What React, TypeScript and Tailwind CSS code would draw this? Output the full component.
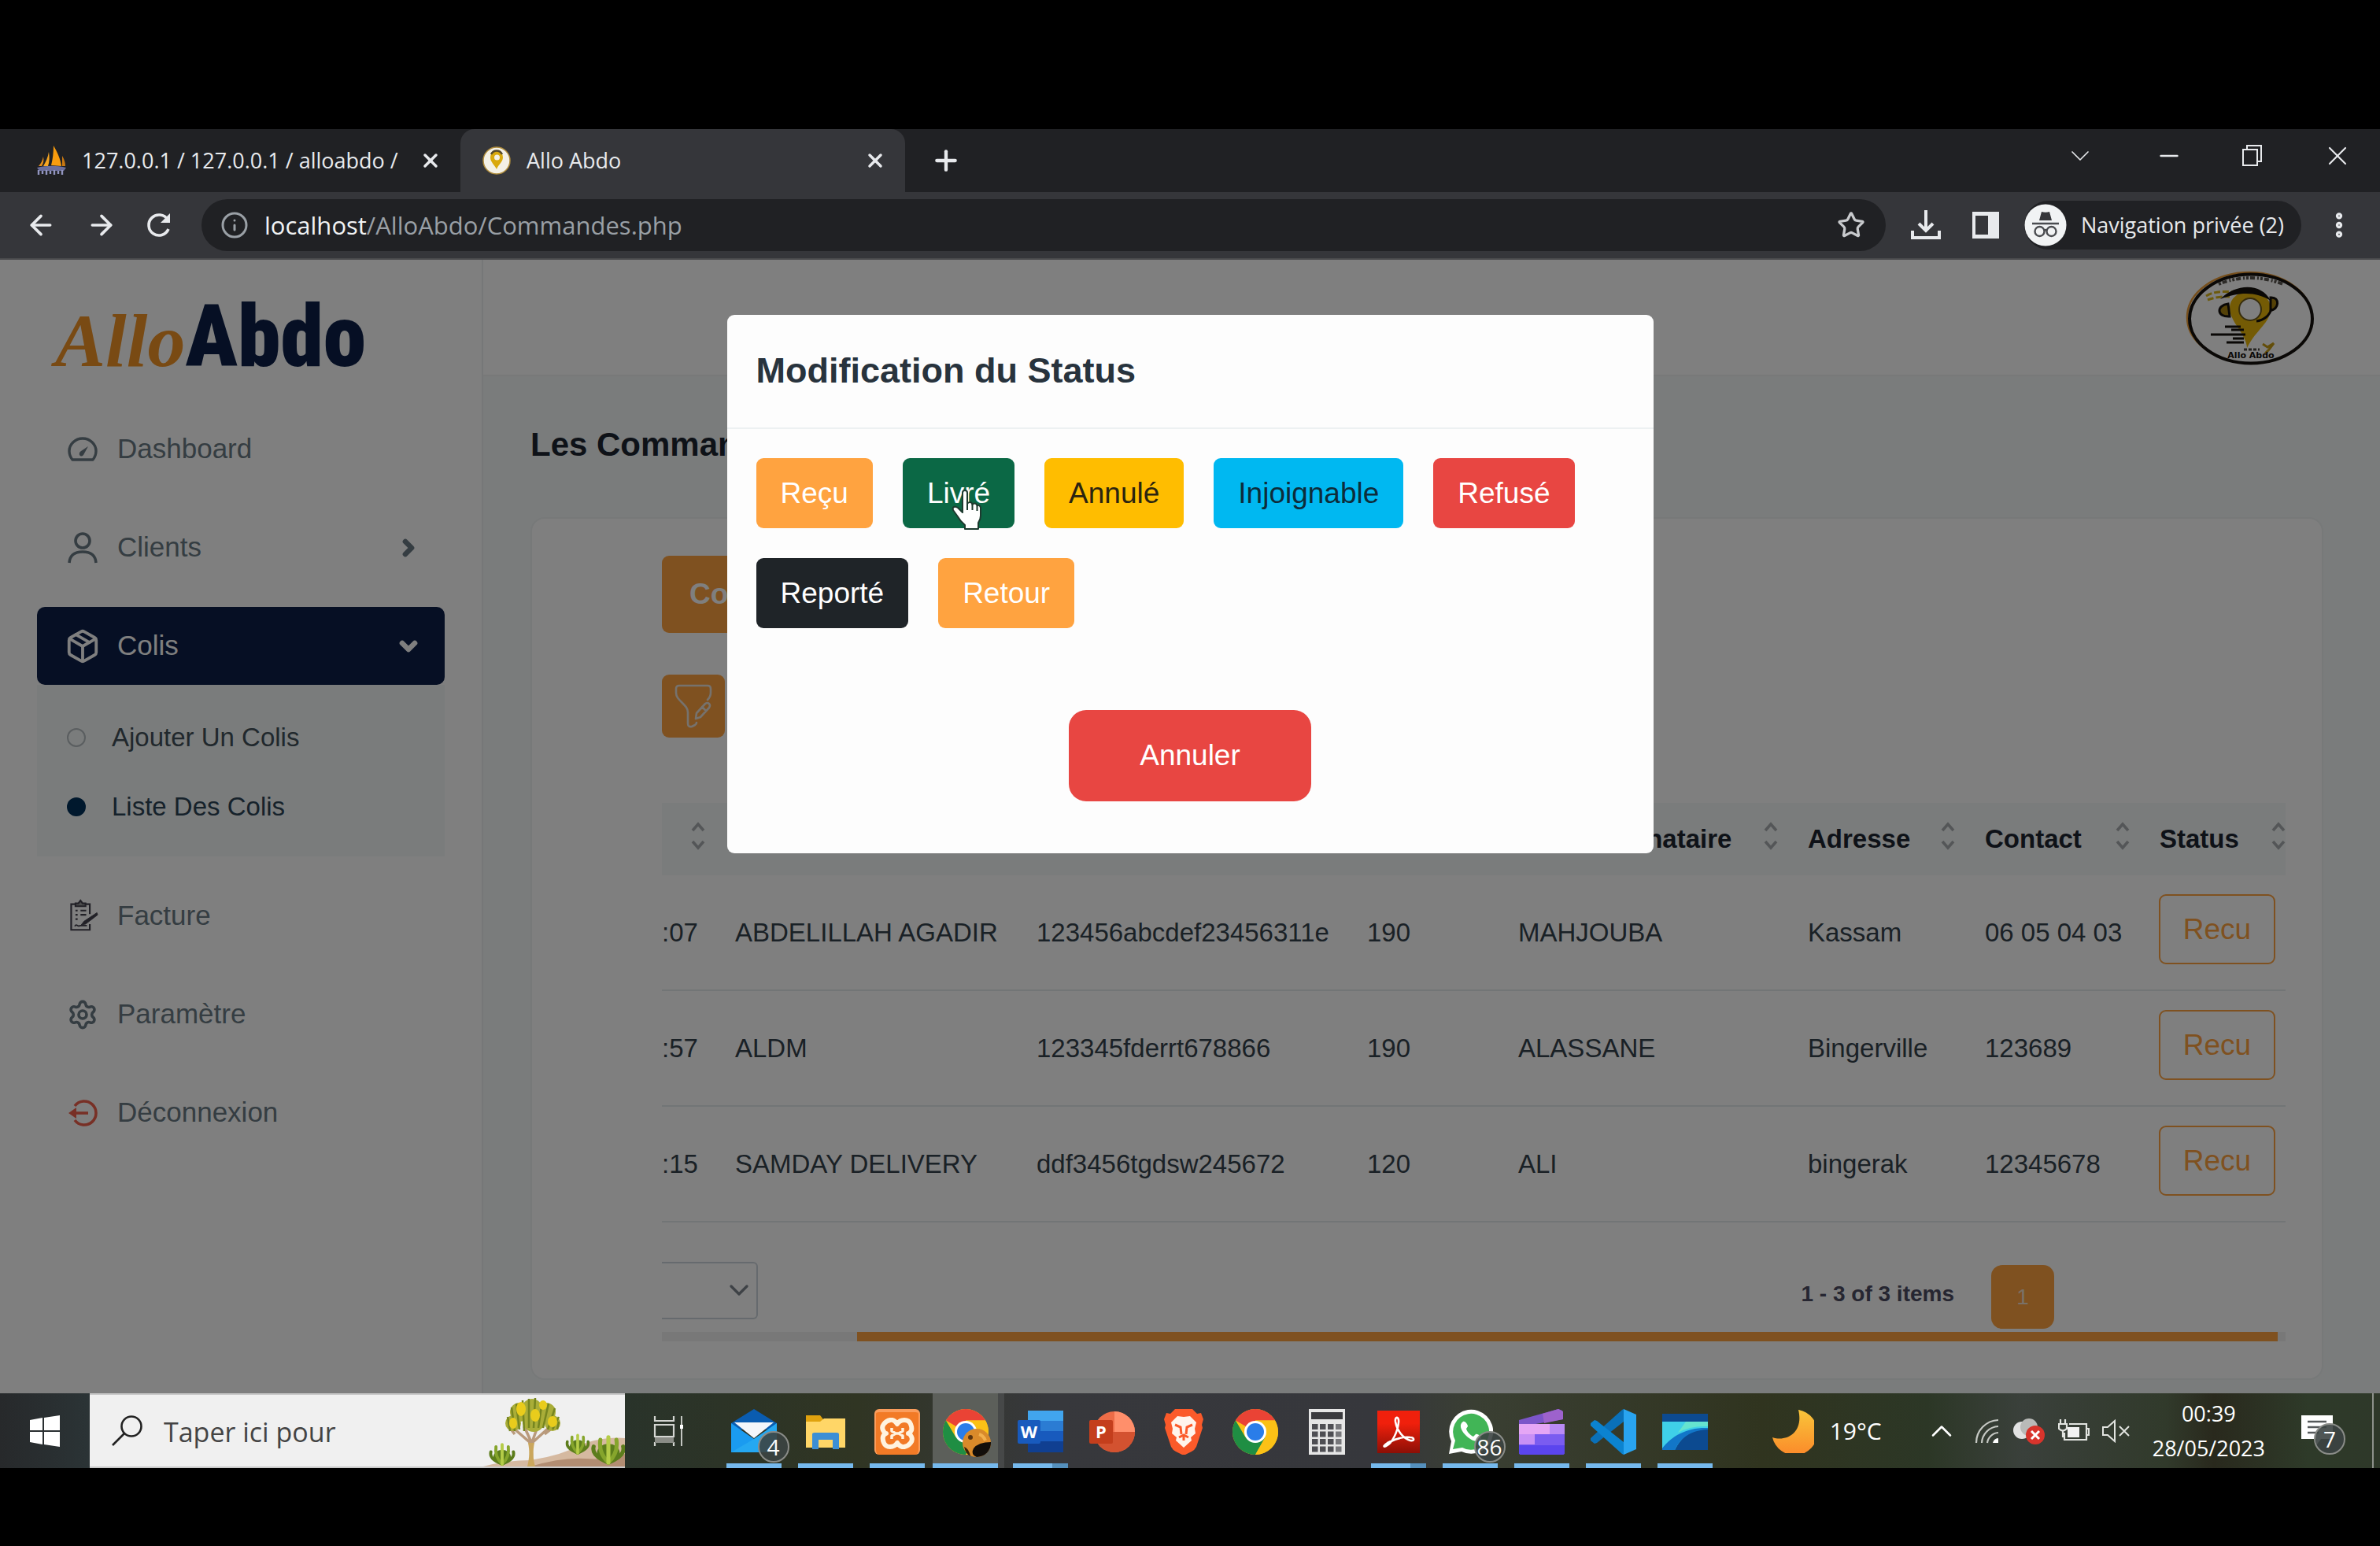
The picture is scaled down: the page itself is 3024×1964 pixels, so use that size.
import React, { useState } from "react";
import {
  ArrowLeft,
  ArrowRight,
  ChevronDown,
  ChevronRight,
  ChevronUp,
  EllipsisVertical,
  Info,
  Minus,
  Package,
  Plus,
  Settings,
  Star,
  X,
} from "lucide-react";

const arial = "font-['Liberation_Sans',Arial,sans-serif]";
const segoe = "font-['Open_Sans','Noto_Sans',sans-serif]";

/* ---------- browser chrome ---------- */

function SailIcon() {
  return (
    <svg viewBox="0 0 40 40" className="size-10">
      <path d="M22 1c5 9 9 17 10 26l-13-1c2-8 3-16 3-25z" fill="#f89c0e" />
      <path d="M16 9c1 7 1 12-1 18H9c3-5 6-11 7-18z" fill="#f6a623" />
      <path d="M9 15c1 5 0 9-2 12H3c3-3 5-7 6-12z" fill="#e58e1a" />
      <path d="M33 14c3 5 4 9 4 13h-4z" fill="#c97811" />
      <path d="M1 29c12-3 26-3 37 0l-3 4H4z" fill="#6c6f9c" />
      <path d="M3 38v-6M8 37v-4M13 38v-6M18 37v-4M23 38v-6M28 37v-4M33 38v-6" stroke="#9295c0" strokeWidth="2.4" />
    </svg>
  );
}

function FavIcon() {
  return (
    <svg viewBox="0 0 36 36" className="size-9">
      <circle cx="18" cy="18" r="17" fill="#f4f1e6" stroke="#b08d3c" strokeWidth="1.5" />
      <path d="M18 29c-2-5-8-9-8-15a8 8 0 0 1 16 0c0 6-6 9-8 15z" fill="#d9a90d" />
      <circle cx="18.500" cy="14" r="3.500" fill="#f4f1e6" />
      <path d="M11 10c3-6 11-6 14 0" stroke="#55492a" strokeWidth="2.500" fill="none" />
    </svg>
  );
}

function ReloadIcon() {
  return (
    <svg viewBox="0 0 34 34" className="size-[34px]" fill="none" stroke="#e8eaed" strokeWidth="3.600">
      <path d="M28 22a13 13 0 1 1-1-12" />
      <path d="M30 2v12H18z" fill="#e8eaed" stroke="none" />
    </svg>
  );
}

function DownloadIcon() {
  return (
    <svg viewBox="0 0 38 38" className="size-[38px]" fill="none" stroke="#e8eaed" strokeWidth="4">
      <path d="M19 0v25M10 17l9 9 9-9" />
      <path d="M2 26v9h34v-9" />
    </svg>
  );
}

function SidePanelIcon() {
  return (
    <svg viewBox="0 0 34 34" className="size-[34px]">
      <path d="M0 0h34v34H0z" fill="#e8eaed" />
      <path d="M4 5h16v24H4z" fill="#35363a" />
    </svg>
  );
}

function IncognitoIcon() {
  return (
    <svg viewBox="0 0 54 54" className="size-[54px]">
      <circle cx="27" cy="27" r="26.500" fill="#f1f3f4" />
      <path d="M19 21l3-11c3 1 7 1 10 0l3 11z" fill="#35363a" />
      <path d="M10 25h34" stroke="#4a4c50" strokeWidth="2.600" />
      <g fill="none" stroke="#4a4c50" strokeWidth="2.400">
        <circle cx="19.500" cy="35" r="6" />
        <circle cx="34.500" cy="35" r="6" />
        <path d="M25.500 34q1.500-2 3 0" />
      </g>
    </svg>
  );
}

function RestoreIcon() {
  return (
    <svg viewBox="0 0 26 28" className="h-7 w-[26px]" fill="none" stroke="#e8eaed" strokeWidth="2">
      <path d="M1 6h18v20H1z" />
      <path d="M6 6V1h18v20h-5" />
    </svg>
  );
}

function Browser() {
  return (
    <header className={segoe}>
      <div className="flex h-20 items-center bg-[#202124] text-[27px] text-[#e8eaed]">
        <div className="flex h-20 w-[585px] shrink-0 items-center pl-[46px] pr-5">
          <SailIcon />
          <span className="ml-[18px] flex-1 overflow-hidden whitespace-nowrap">127.0.0.1 / 127.0.0.1 / alloabdo /</span>
          <button aria-label="Fermer l'onglet" className="ml-5 p-1">
            <X className="size-7" strokeWidth={3} />
          </button>
        </div>
        <div className="flex h-20 w-[565px] shrink-0 items-center rounded-t-[18px] bg-[#35363a] pl-7 pr-5">
          <FavIcon />
          <span className="ml-5 flex-1">Allo Abdo</span>
          <button aria-label="Fermer l'onglet" className="p-1">
            <X className="size-7" strokeWidth={3} />
          </button>
        </div>
        <button aria-label="Nouvel onglet" className="ml-8">
          <Plus className="size-10" strokeWidth={2.600} />
        </button>
        <div className="mb-3 ml-auto flex items-center gap-[75px] pr-[34px]">
          <button aria-label="Rechercher les onglets"><ChevronDown className="size-10" strokeWidth={1} /></button>
          <button aria-label="Réduire"><Minus className="size-9" strokeWidth={1.600} /></button>
          <button aria-label="Restaurer"><RestoreIcon /></button>
          <button aria-label="Fermer"><X className="size-10" strokeWidth={1.300} /></button>
        </div>
      </div>
      <div className="flex h-[86px] items-center border-b-2 border-[#4a4b4d] bg-[#35363a] pl-8 pr-8 text-[#e8eaed]">
        <div className="flex items-center gap-[37px]">
          <button aria-label="Précédent"><ArrowLeft className="size-10" strokeWidth={2.200} /></button>
          <button aria-label="Suivant"><ArrowRight className="size-10" strokeWidth={2.200} /></button>
          <button aria-label="Actualiser"><ReloadIcon /></button>
        </div>
        <div className="ml-9 flex h-[66px] flex-1 items-center rounded-full bg-[#202124] pl-6 pr-[26px]">
          <Info className="size-9 text-[#9aa0a6]" strokeWidth={2} />
          <a href="#page" className="ml-5 flex-1 text-[31px] text-[#9aa0a6]">
            <span className="text-[#f1f3f4]">localhost</span>/AlloAbdo/Commandes.php
          </a>
          <button aria-label="Ajouter aux favoris"><Star className="size-9 text-[#c8cacd]" strokeWidth={2.200} /></button>
        </div>
        <div className="ml-8 flex items-center">
          <button aria-label="Téléchargements"><DownloadIcon /></button>
          <button aria-label="Panneau latéral" className="ml-10"><SidePanelIcon /></button>
          <button className="ml-8 flex h-[62px] items-center rounded-full bg-[#202124] pr-[22px] text-[27px]">
            <IncognitoIcon />
            <span className="ml-[18px]">Navigation privée (2)</span>
          </button>
          <button aria-label="Menu" className="ml-7"><EllipsisVertical className="size-10" strokeWidth={3} /></button>
        </div>
      </div>
    </header>
  );
}

/* ---------- sidebar ---------- */

function GaugeIcon() {
  return (
    <svg viewBox="0 0 40 40" className="size-10" fill="none" stroke="currentColor" strokeWidth="3.400" strokeLinecap="round">
      <path d="M7 33Q3 28 3 22a17 16 0 0 1 34 0q0 6-4 11z" strokeLinejoin="round" />
      <path d="M27 16l-6 11q-3 3-5 0-1-3 2-5z" fill="currentColor" stroke="none" />
    </svg>
  );
}

function UserIcon() {
  return (
    <svg viewBox="0 0 40 40" className="size-10" fill="none" stroke="currentColor" strokeWidth="3.600">
      <circle cx="20" cy="11" r="9" />
      <path d="M3 39q1-14 17-14t17 14" />
    </svg>
  );
}

function InvoiceIcon() {
  return (
    <svg viewBox="0 0 44 46" className="h-[46px] w-11 text-[#44434f]" fill="none" stroke="currentColor" strokeWidth="2.400">
      <path d="M26 6h6v14M12 6H6v36h26V34" />
      <path d="M12 9h14V5h-4l-3-4-3 4h-4z" fill="#9a9a9a" />
      <path d="M12 15h3M19 15h8M12 21h3M19 21h8M12 27h3" />
      <path d="M42 18 24 30l-4 5 6-1 17-13z" fill="currentColor" strokeWidth="1" />
      <path d="M11 37c3-5 4 2 8-1h9" strokeWidth="2" />
    </svg>
  );
}

function LogoutIcon() {
  return (
    <svg viewBox="0 0 40 40" className="size-10 text-[#f0604c]" fill="none" stroke="currentColor" strokeWidth="3.600">
      <path d="M10 11a15 15 0 1 1 0 18" />
      <path d="M8 20h19" />
      <path d="M12 13v14l-10-7z" fill="currentColor" stroke="none" />
    </svg>
  );
}

function NavItem({ icon, label, end, active }: { icon: React.ReactNode; label: string; end?: React.ReactNode; active?: boolean }) {
  return (
    <a
      href={"#" + label}
      className={
        active
          ? "flex h-[99px] items-center rounded-[10px] bg-[#0c1f48] pl-[38px] pr-[30px] text-[35px] text-white"
          : "flex h-[99px] items-center rounded-[10px] pl-[38px] pr-[30px] text-[35px] text-[#6a7a84]"
      }
    >
      <span className="flex w-10 justify-center">{icon}</span>
      <span className="ml-6 flex-1">{label}</span>
      {end}
    </a>
  );
}

function Sidebar() {
  return (
    <aside className="w-[614px] shrink-0 border-r-2 border-[#eceff0] bg-white">
      <div className="flex h-[191px] items-baseline pl-[70px] pt-8">
        <span className="font-['Liberation_Serif',serif] text-[96px] leading-[132px] font-bold italic text-[#f29427]">Allo</span>
        <span className="font-['Roboto_Condensed','Liberation_Sans_Narrow',Roboto,sans-serif] text-[110px] leading-[132px] font-black text-[#0c1f48]">Abdo</span>
      </div>
      <nav className="flex flex-col gap-[26px] px-[47px]">
        <NavItem icon={<GaugeIcon />} label="Dashboard" />
        <NavItem icon={<UserIcon />} label="Clients" end={<ChevronRight className="size-8" strokeWidth={5} />} />
        <div>
          <NavItem active icon={<Package className="size-[46px] shrink-0" strokeWidth={2} />} label="Colis" end={<ChevronDown className="size-8" strokeWidth={5} />} />
          <ul className="flex h-[218px] flex-col gap-12 bg-[#f5f9f8] pl-[38px] pt-[47px] text-[33px] leading-10 text-[#42515a]">
            <li>
              <a href="#ajouter" className="flex items-center gap-[33px]">
                <span className="size-6 rounded-full border-2 border-[#b5bcc0]" />
                Ajouter Un Colis
              </a>
            </li>
            <li>
              <a href="#liste" className="flex items-center gap-[33px] text-[#2c4456]">
                <span className="size-6 rounded-full bg-[#00305a]" />
                Liste Des Colis
              </a>
            </li>
          </ul>
        </div>
        <NavItem icon={<InvoiceIcon />} label="Facture" />
        <NavItem icon={<Settings className="size-10" strokeWidth={2.200} />} label="Paramètre" />
        <NavItem icon={<LogoutIcon />} label="Déconnexion" />
      </nav>
    </aside>
  );
}

/* ---------- main area ---------- */

function Emblem() {
  return (
    <svg viewBox="0 0 164 120" className="h-[120px] w-[164px]">
      <ellipse cx="81" cy="59" rx="79" ry="57" fill="none" stroke="#ee9f38" strokeWidth="2.500" />
      <ellipse cx="83" cy="61" rx="78" ry="56.500" fill="#fff" stroke="#15110d" strokeWidth="4" />
      <path d="M42 17Q82 1 124 17" fill="none" stroke="#5a5650" strokeWidth="4" strokeDasharray="3 2 6 3 2 2" />
      <path d="M26 32c10-6 20-6 36-5M28 37c8-3 18-5 28-4" stroke="#d9b416" strokeWidth="3" fill="none" strokeDasharray="8 3" />
      <path d="M78 98c0-16-22-34-22-50 0-13 11-22 26-22s26 9 26 22c0 18-18 26-30 50z" fill="#e8b70b" />
      <path d="M44 36c20-20 52-21 64 2-18-11-38-12-64-2z" fill="#15110d" />
      <circle cx="82" cy="49" r="14" fill="#fff" stroke="#6e5a1a" strokeWidth="2" />
      <path d="M54 42c-15 2-15 17 2 16zM108 34c13-1 10 16 0 16z" fill="#a8830f" stroke="#15110d" strokeWidth="3" />
      <path d="M90 64c9-1 17-7 19-16" stroke="#15110d" strokeWidth="3" fill="none" />
      <path d="M50 71h20M58 75h16M32 81h44M60 86h14M52 91h22" stroke="#15110d" strokeWidth="3" />
      <path d="M98 93l6 4 8-5-6 8-5 5" stroke="#c79d14" strokeWidth="3" fill="none" />
      <path d="M74 100h20" stroke="#4a4640" strokeWidth="3" strokeDasharray="4 2" />
      <text x="83" y="111" textAnchor="middle" fontSize="11" fontWeight="700" fontFamily="DejaVu Sans" fill="#15110d">Allo Abdo</text>
    </svg>
  );
}

function FilterIcon() {
  return (
    <svg viewBox="0 0 48 56" className="h-14 w-12" fill="none" stroke="#ece4da" strokeWidth="2.600" strokeLinecap="round" strokeLinejoin="round">
      <path d="M42 20c3-3 4-6 4-9V6q0-4-4-4H6Q2 2 2 6v5c0 5 3 8 7 12 5 5 8 8 8 13v14q0 5 5 4l4-2q2-1 2-3" />
      <path d="M28 37l11-12q3-2 5 0t0 5L33 42l-6 2zM35 29l5 5" />
    </svg>
  );
}

function SortIcon() {
  return (
    <svg viewBox="0 0 18 36" className="h-9 w-[18px]" fill="none" stroke="#a9adb0" strokeWidth="3.600">
      <path d="M2 11l7-8 7 8M2 25l7 8 7-8" />
    </svg>
  );
}

const columns = ["", "Client", "Code", "Prix", "Nom Destinataire", "Adresse", "Contact", "Status"];
const rows = [
  [":07", "ABDELILLAH AGADIR", "123456abcdef23456311e", "190", "MAHJOUBA", "Kassam", "06 05 04 03"],
  [":57", "ALDM", "123345fderrt678866", "190", "ALASSANE", "Bingerville", "123689"],
  [":15", "SAMDAY DELIVERY", "ddf3456tgdsw245672", "120", "ALI", "bingerak", "12345678"],
];

function Orders() {
  return (
    <table className="w-full table-fixed text-left text-[33px] leading-10 text-[#35424c]">
      <colgroup>
        <col className="w-[75px]" />
        <col className="w-[383px]" />
        <col className="w-[420px]" />
        <col className="w-[192px]" />
        <col />
        <col className="w-[225px]" />
        <col className="w-[222px]" />
        <col className="w-[178px]" />
      </colgroup>
      <thead>
        <tr className="h-[92px] bg-[#f5f9f8] text-[#1c2530]">
          {columns.map((c, i) => (
            <th key={i} className={i === 7 ? "pl-[18px]" : "pl-[18px] pr-5"}>
              <span className="flex items-center justify-between whitespace-nowrap">
                {c}
                <button aria-label={"Trier " + c} className={i === 0 ? "ml-auto mb-2" : "mb-2"}><SortIcon /></button>
              </span>
            </th>
          ))}
        </tr>
      </thead>
      <tbody>
        {rows.map((r) => (
          <tr key={r[0]}>
            {r.map((v, i) => (
              <td key={i} className={i === 0 ? "border-b-2 border-[#e4ebed]" : "whitespace-nowrap border-b-2 border-[#e4ebed] pl-[18px]"}>{v}</td>
            ))}
            <td className="border-b-2 border-[#e4ebed] pb-8 pl-[17px] pt-6">
              <button className="block h-[89px] w-[148px] rounded-[9px] border-2 border-[#ffa340] text-[37px] text-[#ffa340]">Recu</button>
            </td>
          </tr>
        ))}
      </tbody>
    </table>
  );
}

function Main() {
  return (
    <div className="flex min-w-0 flex-1 flex-col bg-[#f5f9f8]">
      <div className="flex h-[148px] items-start justify-end border-b-2 border-[#f0f3f3] bg-white pr-[83px] pt-[14px]">
        <Emblem />
      </div>
      <main className="flex flex-1 flex-col pb-[17px] pl-[60px] pr-[72px] pt-[61px]">
        <h1 className="text-[42px] leading-[52px] font-bold text-[#1c2530]">Les Commandes</h1>
        <section className="mt-[66px] flex-1 rounded-[18px] border-2 border-[#eef2f3] bg-white pb-11 pl-[165px] pr-[46px] pt-[47px]">
          <button className="block h-[98px] rounded-[9px] bg-[#ffa340] px-[35px] text-[37px] font-bold text-white">Colis</button>
          <button aria-label="Filtrer" className="mt-[53px] flex h-20 w-20 items-center justify-center rounded-[9px] bg-[#ffa340]">
            <FilterIcon />
          </button>
          <div className="mt-[83px]">
            <Orders />
          </div>
          <div className="flex items-start pb-1 pt-[50px]">
            <div className="relative">
              <select aria-label="Nombre de lignes" className="h-[73px] w-[122px] appearance-none rounded-r-[6px] border-y-2 border-r-2 border-[#cdd5dc] bg-white">
                <option></option>
              </select>
              <ChevronDown className="pointer-events-none absolute right-1 top-4 size-10 text-[#7c858c]" strokeWidth={2} />
            </div>
            <span className="ml-auto flex h-[81px] items-center text-[28px] font-bold text-[#4c4c63]">1 - 3 of 3 items</span>
            <button className="ml-[47px] mr-[294px] mt-1 h-[81px] w-20 rounded-[14px] bg-[#ffa340] text-[28px] text-[#f4e3cf]">1</button>
          </div>
          <div className="flex h-3 bg-[#f1f1f1]">
            <div className="ml-[12%] mr-[10px] flex-1 bg-[#ffa340]" />
          </div>
        </section>
      </main>
    </div>
  );
}

/* ---------- dialog ---------- */

function HandCursor() {
  return (
    <svg viewBox="0 0 40 52" className="pointer-events-none absolute left-[62px] top-10 h-[52px] w-10">
      <path
        d="M14 4q0-3 3-3t3 3v14q1-2 3.500-2t3 3q1-1.500 3-1.500t3 3q1-1 2.500-.5t2 3V33q0 5-3 9v8H17v-5Q11 40 7 33l-5-7q-1-3 1-4t5 1l6 6z"
        fill="#fff"
        stroke="#1d3a2f"
        strokeWidth="2"
        strokeLinejoin="round"
      />
      <path d="M20 18v8M26.500 19v7M32.500 21v6" stroke="#1d3a2f" strokeWidth="2" />
    </svg>
  );
}

const statusButton = "relative h-[89px] rounded-[9px] px-[31px]";

function StatusDialog({ onClose }: { onClose: () => void }) {
  return (
    <div className="absolute inset-0 flex items-start justify-center bg-black/50 pt-[70px]">
      <div role="dialog" aria-labelledby="status-title" className="w-[1177px] rounded-[9px] bg-[#fdfdfd] pb-[66px]">
        <h2 id="status-title" className="border-b-2 border-[#edf1f2] px-[37px] pb-[45px] pt-11 text-[45px] leading-[54px] font-bold text-[#28333d]">
          Modification du Status
        </h2>
        <div className="flex flex-wrap gap-x-[38px] gap-y-[38px] px-[37px] pt-[37px] text-[37px] text-white">
          <button className={statusButton + " bg-[#ffa340]"}>Reçu</button>
          <button className={statusButton + " bg-[#0b6845]"}>
            Livré
            <HandCursor />
          </button>
          <button className={statusButton + " bg-[#ffbd00] text-[#2b2410]"}>Annulé</button>
          <button className={statusButton + " bg-[#00b8f1] text-[#0d2c3a]"}>Injoignable</button>
          <button className={statusButton + " bg-[#e84642]"}>Refusé</button>
          <button className={statusButton + " bg-[#1f2428]"}>Reporté</button>
          <button className={statusButton + " bg-[#ffa340]"}>Retour</button>
        </div>
        <div className="mt-[104px] flex justify-center">
          <button onClick={onClose} className="h-[116px] w-[308px] rounded-[22px] bg-[#e84642] text-[37px] text-white">Annuler</button>
        </div>
      </div>
    </div>
  );
}

/* ---------- taskbar ---------- */

const icon = "size-[58px]";

function Mail() {
  return (
    <svg viewBox="0 0 58 58" className={icon}>
      <path d="M0 18 29 0l29 18v8H0z" fill="#0a5cb0" />
      <path d="M0 18l29 20 29-20v37H0z" fill="#1a9bf0" />
      <path d="M58 18v37H0l29-17z" fill="#2fb3f3" opacity=".55" />
      <path d="M4 17h50L29 37z" fill="#f4f6fa" />
    </svg>
  );
}

function Folder() {
  return (
    <svg viewBox="0 0 58 58" className={icon}>
      <path d="M4 8h18l4 5v8H4z" fill="#e0a20e" />
      <path d="M4 16h18l5-4h27v37H4z" fill="#ffd667" />
      <path d="M12 51V32q0-2 3-2h28q3 0 3 2v19h-8V39H20v12z" fill="#3d8fd4" />
    </svg>
  );
}

function Xampp() {
  return (
    <span className="flex size-[58px] items-center justify-center rounded-[6px] border-x-2 border-t-4 border-[#fb9d5c] bg-[#f27a26]">
      <svg viewBox="0 0 44 40" className="h-10 w-11" fill="none" stroke="#fff3df" strokeWidth="6" strokeLinejoin="round">
        <path d="M22 8q3-5 9-5t8 5 1 8q-2 4-4 4 2 0 4 4t-1 8-8 5-9-5q-3 5-9 5t-8-5-1-8 4-4q-2 0-4-4t1-8 8-5 9 5z" />
        <path d="M15 13v4l5 3-5 3v4M29 13v4l-5 3 5 3v4M19 20h6" strokeWidth="3.500" />
      </svg>
    </span>
  );
}

function Chrome() {
  return (
    <svg viewBox="0 0 58 58" className={icon}>
      <circle cx="29" cy="29" r="29" fill="#fbc116" />
      <path d="M29 29 3.900 14.500A29 29 0 0 1 54.100 14.500H29z" fill="#ea4335" />
      <path d="M3.900 14.500A29 29 0 0 0 29 58l12.500-22L29 29l-12.500 7z" fill="#1f8e43" />
      <path d="M29 58 41.500 36 29 14.500h25.100A29 29 0 0 1 29 58z" fill="#fbc116" />
      <circle cx="29" cy="29" r="14" fill="#fff" />
      <circle cx="29" cy="29" r="11" fill="#2a7de9" />
    </svg>
  );
}

function ChromeProfile() {
  return (
    <span className="relative">
      <Chrome />
      <svg viewBox="0 0 38 38" className="absolute -bottom-1 -right-1 size-[38px]">
        <circle cx="19" cy="19" r="18" fill="#d98a2a" />
        <path d="M15 26q6-8 22-8a18 18 0 0 1-18 19q-8-3-4-11z" fill="#120e0a" />
        <path d="M3 24q6 2 8 12-6-3-8-12z" fill="#3a2208" />
        <circle cx="11" cy="12" r="3" fill="#5a3510" />
        <path d="M22 8q6 2 8 8" stroke="#f3b04c" strokeWidth="4" fill="none" />
      </svg>
    </span>
  );
}

function Word() {
  return (
    <svg viewBox="0 0 58 58" className={icon}>
      <path d="M13 2h45v14H13z" fill="#41a5ee" />
      <path d="M13 15h45v14H13z" fill="#2b7cd3" />
      <path d="M13 28h45v14H13z" fill="#185abd" />
      <path d="M13 41h45v14H13z" fill="#103f91" />
      <rect y="14" width="29" height="30" rx="2" fill="#185abd" />
      <text x="14.500" y="37" textAnchor="middle" fontSize="22" fontWeight="700" fontFamily="Open Sans" fill="#fff">W</text>
    </svg>
  );
}

function PowerPoint() {
  return (
    <svg viewBox="0 0 58 58" className={icon}>
      <circle cx="32" cy="29" r="26" fill="#ed6c47" />
      <path d="M32 3a26 26 0 0 1 26 26H32z" fill="#ff8f6b" />
      <path d="M6 29a26 26 0 0 0 52 0z" fill="#d35230" />
      <rect y="14" width="30" height="30" rx="2" fill="#c43e1c" />
      <text x="15" y="37" textAnchor="middle" fontSize="22" fontWeight="700" fontFamily="Open Sans" fill="#fff">P</text>
    </svg>
  );
}

function Brave() {
  return (
    <svg viewBox="0 0 50 58" className="h-[58px] w-[50px]">
      <path d="M14 0h22l6 6 5-1 3 8-2 7 1 4-8 24q-2 4-6 6l-8 4h-4l-8-4q-4-2-6-6L1 24l1-4-2-7 3-8 5 1z" fill="#fb5a2a" />
      <path d="M25 10l8-1 8 8-2 8 1 6-6 5 1 4-10 9-10-9 1-4-6-5 1-6-2-8 8-8z" fill="#fff4ec" />
      <path d="M14 20l7 3 1 9M36 20l-7 3-1 9M19 36l6-3 6 3M25 34v6" stroke="#fb5a2a" strokeWidth="3" fill="none" />
    </svg>
  );
}

function Calculator() {
  return (
    <svg viewBox="0 0 46 58" className="h-[58px] w-[46px]">
      <path d="M0 0h46v58H0z" fill="#e6e6e6" />
      <path d="M3 4h40v9H3z" fill="#3a3a3e" />
      {[0, 1, 2, 3].map((r) =>
        [0, 1, 2, 3].map((c) => <rect key={r + "-" + c} x={4 + c * 10} y={19 + r * 9.5} width="7.500" height="7" fill={c === 3 ? "#77777b" : "#4e4e53"} />)
      )}
    </svg>
  );
}

function Acrobat() {
  return (
    <svg viewBox="0 0 54 54" className="size-[54px]">
      <defs>
        <linearGradient id="pdf" x1="0" y1="0" x2="0" y2="1">
          <stop offset=".3" stopColor="#f0200c" />
          <stop offset="1" stopColor="#8c0f06" />
        </linearGradient>
      </defs>
      <path d="M0 0h54v54H0z" fill="url(#pdf)" />
      <path d="M11 45c8-3 15-19 16-30 1-8-5-8-4-1 2 11 9 21 19 24 6 1 5-4 0-4-10-1-20 2-29 7-5 3-6 6-2 4z" fill="none" stroke="#fff" strokeWidth="2.600" />
    </svg>
  );
}

function WhatsApp() {
  return (
    <svg viewBox="0 0 58 58" className={icon}>
      <path d="M2 57 5 41A28 28 0 1 1 18 54z" fill="#fff" />
      <path d="M7 51l3-11a23 23 0 1 1 9 9z" fill="#41b556" />
      <path d="M20 16c-5 3-4 10 3 17s16 11 20 5c1-3-5-7-7-6l-3 3c-4-2-8-6-9-10l2-3c0-2-3-7-6-6z" fill="#fff" />
    </svg>
  );
}

function Clipchamp() {
  return (
    <svg viewBox="0 0 58 58" className={icon}>
      <path d="M0 14 50 0l5 2 1 11L4 22H0z" fill="#7b55c9" />
      <path d="M30 6 50 0l6 3v10l-24 5z" fill="#9d62cc" />
      <rect y="19" width="58" height="39" rx="3" fill="#7a5cf0" />
      <path d="M0 19h39v13H0z" fill="#e5a6f5" />
      <path d="M39 19h19v13H39z" fill="#b98af5" />
      <path d="M0 32h20v13H0z" fill="#c890f5" />
      <path d="M0 46h58v9q0 3-3 3H3q-3 0-3-3z" fill="#5b45ee" />
    </svg>
  );
}

function VsCode() {
  return (
    <svg viewBox="0 0 58 58" className={icon}>
      <path d="M42 0v16L8 43l-3 1-5-4v-3L40 1z" fill="#0a70b8" />
      <path d="M42 58V42L8 15l-3-1-5 4v3l40 36z" fill="#0b83d0" />
      <path d="M42 0 58 7v44L42 58z" fill="#29a4f0" />
    </svg>
  );
}

function Swoosh() {
  return (
    <svg viewBox="0 0 58 46" className="h-[46px] w-[58px]">
      <path d="M0 0h58v46H0z" fill="#0c4a90" />
      <path d="M0 10h58v10C36 19 24 30 16 46H0z" fill="#3fd0e8" />
      <path d="M58 18C32 17 12 28 0 44v2h16C24 30 36 21 58 20z" fill="#1276c8" />
      <path d="M30 10h28v6q-22-1-38 8z" fill="#6fe8c8" opacity=".8" />
    </svg>
  );
}

function Badge({ children }: { children: React.ReactNode }) {
  return (
    <span className="absolute -bottom-[10px] -right-4 flex size-10 items-center justify-center rounded-full border-2 border-[#8a8c88] bg-[#3c4443]/90 text-[28px] leading-none font-medium text-white">
      {children}
    </span>
  );
}

type App = { name: string; glyph: React.ReactNode; badge?: string; bar?: "one" | "two"; current?: boolean };

const apps: App[] = [
  { name: "Courrier", glyph: <Mail />, badge: "4", bar: "one" },
  { name: "Explorateur", glyph: <Folder />, bar: "one" },
  { name: "XAMPP", glyph: <Xampp />, bar: "one" },
  { name: "Chrome privé", glyph: <ChromeProfile />, bar: "two", current: true },
  { name: "Word", glyph: <Word />, bar: "two" },
  { name: "PowerPoint", glyph: <PowerPoint /> },
  { name: "Brave", glyph: <Brave /> },
  { name: "Chrome", glyph: <Chrome /> },
  { name: "Calculatrice", glyph: <Calculator /> },
  { name: "Acrobat", glyph: <Acrobat />, bar: "two" },
  { name: "WhatsApp", glyph: <WhatsApp />, badge: "86", bar: "one" },
  { name: "Clipchamp", glyph: <Clipchamp />, bar: "one" },
  { name: "VS Code", glyph: <VsCode />, bar: "one" },
  { name: "Moniteur", glyph: <Swoosh />, bar: "one" },
];

function TaskApp({ app }: { app: App }) {
  return (
    <button
      aria-label={app.name}
      className={app.current ? "flex h-full w-[91px] flex-col items-center border-r-8 border-[#464848] bg-[#5c5f5a]" : "flex h-full w-[91px] flex-col items-center"}
    >
      <span className="flex flex-1 items-center pt-2">
        <span className="relative">
          {app.glyph}
          {app.badge && <Badge>{app.badge}</Badge>}
        </span>
      </span>
      {app.bar ? (
        <span className={app.current ? "flex h-[6px] w-full" : "flex h-[6px] w-[70px]"}>
          <span className="flex-1 bg-[#76b9ed]" />
          {app.bar === "two" && !app.current && <span className="w-5 bg-[#5590bd]" />}
        </span>
      ) : (
        <span className="h-[6px]" />
      )}
    </button>
  );
}

function WindowsIcon() {
  return (
    <svg viewBox="0 0 40 40" className="size-10" fill="#fff">
      <path d="M1 6l16-3v16H1zM19 3l20-3v19H19zM1 21h16v16L1 34zM19 21h20v19l-20-3z" />
    </svg>
  );
}

function SearchGlass() {
  return (
    <svg viewBox="0 0 40 40" className="size-10" fill="none" stroke="#222" strokeWidth="2.600">
      <circle cx="25" cy="14" r="12.500" />
      <path d="M16 23 1 38" />
    </svg>
  );
}

function Plant({ x, y, s }: { x: number; y: number; s: number }) {
  return (
    <g transform={"translate(" + x + " " + y + ") scale(" + s + ")"} fill="none" strokeLinecap="round">
      <ellipse cx="0" cy="-14" rx="17" ry="14" fill="#5c7d1c" />
      <path d="M0 0Q-26-10-22-24M0 0Q26-10 22-24" stroke="#5c7d1c" strokeWidth="6" />
      <path d="M0 0Q-15-14-12-34M0 0Q15-14 12-34" stroke="#86a52c" strokeWidth="6" />
      <path d="M0 0V-38" stroke="#b5cc48" strokeWidth="6" />
    </g>
  );
}

function TreeScene() {
  return (
    <svg viewBox="0 0 180 93" className="h-[93px] w-[180px]">
      <path d="M0 93q30-8 60-8 40-6 70-22 26-8 50-6v36z" fill="#d5b9a0" />
      <path d="M60 93q40-12 70-10t50-6v16z" fill="#b28d72" />
      <path d="M60 92c3-12 2-20 0-29L38 44M62 63l20-18M61 62 52 42M62 62l8-22M40 52l-6-8M78 52l10-8" stroke="#b99a7c" strokeWidth="3.500" fill="none" />
      <path d="M56 93c3-12 3-20 1-30h8c-2 10-2 20 1 30z" fill="#caa65c" />
      <g fill="#a9ad38">
        <circle cx="62" cy="20" r="13" /><circle cx="46" cy="24" r="12" /><circle cx="80" cy="24" r="12" />
        <circle cx="38" cy="38" r="10" /><circle cx="88" cy="38" r="10" /><circle cx="64" cy="35" r="14" />
      </g>
      <path d="M34 48 31 30M40 48 36 18M46 46 42 13M52 48 50 9M58 44V7M64 44l2-38M70 44l5-34M76 44l7-31M82 46l9-27M88 46l8-16M94 46l2-10" stroke="#76851f" strokeWidth="2.500" />
      <g fill="#e9cc1c">
        <ellipse cx="48" cy="20" rx="6" ry="9" /><ellipse cx="38" cy="38" rx="5" ry="7" />
        <ellipse cx="66" cy="28" rx="6" ry="8" /><ellipse cx="88" cy="36" rx="6" ry="7" /><ellipse cx="76" cy="15" rx="5" ry="6" />
      </g>
      <Plant x={24} y={90} s={0.65} />
      <Plant x={120} y={76} s={0.6} />
      <Plant x={159} y={88} s={0.85} />
    </svg>
  );
}

function TaskViewIcon() {
  return (
    <svg viewBox="0 0 40 40" className="size-10" fill="none" stroke="#d4d6d2" strokeWidth="2.200">
      <path d="M2 1v6h24V1M2 12h24v15H2zM2 39v-5M26 39v-5" />
      <path d="M2 28h24v7H2z" fill="#8a8c86" stroke="none" />
      <path d="M36 1v38" strokeWidth="1.800" />
      <path d="M34 12h4v5h-4z" fill="#fff" stroke="none" />
    </svg>
  );
}

function Moon() {
  return (
    <svg viewBox="0 0 54 56" className="h-14 w-[54px]">
      <defs>
        <linearGradient id="moon" x1="0" y1="0" x2="0" y2="1">
          <stop offset="0" stopColor="#f9c53a" />
          <stop offset="1" stopColor="#fb8a2a" />
        </linearGradient>
      </defs>
      <path d="M34 1a29 29 0 1 1-33 35c18 6 40-6 33-35z" fill="url(#moon)" />
    </svg>
  );
}

function WifiIcon() {
  return (
    <svg viewBox="0 0 32 32" className="size-8" fill="none" stroke="#c6c9c4" strokeWidth="2.200">
      <path d="M2 31A29 29 0 0 1 30 2M9 31A22 22 0 0 1 30 10M16 31a15 15 0 0 1 14-13" />
      <path d="M23 31a8 8 0 0 1 7-6v6z" fill="#fff" stroke="none" />
    </svg>
  );
}

function CloudIcon() {
  return (
    <svg viewBox="0 0 42 36" className="h-9 w-[42px]">
      <circle cx="12" cy="17" r="11" fill="#e2e2e2" />
      <circle cx="21" cy="13" r="11" fill="#b9bab8" />
      <circle cx="29" cy="23" r="12" fill="#d8342c" />
      <path d="M24 18l10 10M34 18 24 28" stroke="#fff" strokeWidth="3" />
    </svg>
  );
}

function BatteryIcon() {
  return (
    <svg viewBox="0 0 40 30" className="h-[30px] w-10" fill="none" stroke="#e2e4e0" strokeWidth="2.200">
      <path d="M14 6h22v20H8V17M37 12h2v8h-2" />
      <path d="M12 10h15v13H12z" fill="#f2f2f2" stroke="none" />
      <path d="M3 0v5M9 0v5M1 6h10v6q-5 5-10 0zM6 15v8" />
    </svg>
  );
}

function MuteIcon() {
  return (
    <svg viewBox="0 0 36 30" className="h-[30px] w-9" fill="none" stroke="#e2e4e0" strokeWidth="2">
      <path d="M1 10h6l9-8v26l-9-8H1zM22 9l12 12M34 9 22 21" />
    </svg>
  );
}

function ChatIcon() {
  return (
    <svg viewBox="0 0 40 40" className="size-10">
      <path d="M0 0h40v30H25l-6 8v-8H0z" fill="#fff" />
      <path d="M8 8h24M8 15h24M8 22h14" stroke="#55595a" strokeWidth="2.400" />
    </svg>
  );
}

function Taskbar() {
  return (
    <footer
      className={
        segoe +
        " flex h-[95px] items-center bg-[linear-gradient(90deg,#27292b_0%,#2b3436_4%,#29332a_26%,#303523_36%,#37383c_44%,#36373c_58%,#3a3f33_62%,#30341f_74%,#2c3726_81%,#3a403b_85%,#313a2b_91%,#29291d_93%,#2e3a29_97%,#2e3829_100%)] text-white"
      }
    >
      <button aria-label="Démarrer" className="flex w-[114px] justify-center"><WindowsIcon /></button>
      <label className="flex h-full w-[680px] items-end border-y-2 border-[#c9c9c9] bg-[#f0f0f0] pl-7">
        <span className="self-center"><SearchGlass /></span>
        <input aria-label="Rechercher" placeholder="Taper ici pour" className="ml-[26px] mt-1 min-w-0 flex-1 self-center bg-transparent text-[34px] text-[#333] outline-none placeholder:text-[#444] placeholder:opacity-100" />
        <TreeScene />
      </label>
      <button aria-label="Vue des tâches" className="ml-9"><TaskViewIcon /></button>
      <div className="ml-[42px] flex h-full">
        {apps.map((a) => (
          <TaskApp key={a.name} app={a} />
        ))}
      </div>
      <div className="ml-auto flex h-full items-center">
        <button className="flex items-center gap-5 text-[30px]"><Moon />19°C</button>
        <button aria-label="Icônes cachées" className="ml-[54px]"><ChevronUp className="size-11" strokeWidth={1.400} /></button>
        <div className="ml-5 flex items-center gap-4">
          <WifiIcon />
          <CloudIcon />
          <BatteryIcon />
          <MuteIcon />
        </div>
        <button className="ml-[28px] flex flex-col items-center text-[27px] leading-[44px]">
          <span>00:39</span>
          <span>28/05/2023</span>
        </button>
        <button aria-label="Notifications" className="relative ml-[46px] mr-[50px]">
          <ChatIcon />
          <Badge>7</Badge>
        </button>
        <div className="mr-2 h-full w-[2px] bg-[#8d918a]" />
      </div>
    </footer>
  );
}

export default function App() {
  const [open, setOpen] = useState(true);
  return (
    <div className={arial + " flex min-h-screen flex-col bg-black pb-[99px] pt-[164px]"}>
      <Browser />
      <div id="page" className="relative flex flex-1">
        <Sidebar />
        <Main />
        {open && <StatusDialog onClose={() => setOpen(false)} />}
      </div>
      <Taskbar />
    </div>
  );
}
